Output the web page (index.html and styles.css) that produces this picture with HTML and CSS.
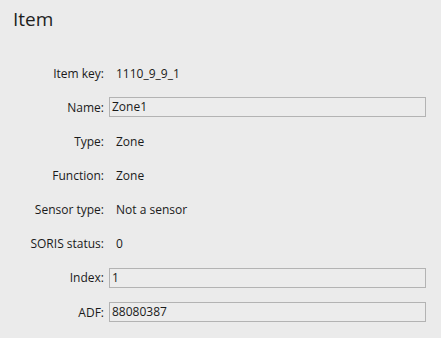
FILE: index.html
```html
<!DOCTYPE html>
<html>
<head>
<meta charset="utf-8">
<link rel="stylesheet" href="styles.css">
</head>
<body>
<div class="panel">
  <h1 class="title">Item</h1>
  <div class="form">
    <div class="label">Item key:</div><div class="value">1110_9_9_1</div>
    <div class="label">Name:</div><div class="field">Zone1</div>
    <div class="label">Type:</div><div class="value">Zone</div>
    <div class="label">Function:</div><div class="value">Zone</div>
    <div class="label">Sensor type:</div><div class="value">Not a sensor</div>
    <div class="label">SORIS status:</div><div class="value">0</div>
    <div class="label">Index:</div><div class="field">1</div>
    <div class="label">ADF:</div><div class="field">88080387</div>
  </div>
</div>
</body>
</html>
```
FILE: styles.css
```css
html, body {
  margin: 0;
  padding: 0;
  background: #ebebeb;
}
.panel {
  width: 441px;
  height: 338px;
  font-family: "Open Sans", "Noto Sans", sans-serif;
  color: #1a1a1a;
  box-sizing: border-box;
  padding: 6px 15px 0 13px;
}
.title {
  margin: 0;
  font-weight: 400;
  font-size: 19px;
  line-height: 26px;
  color: #1e1e1e;
}
.form {
  margin-top: 24px;
  display: grid;
  grid-template-columns: 91px 1fr;
  grid-auto-rows: 34.15px;
  column-gap: 5px;
  align-items: center;
  font-size: 12px;
}
.label {
  text-align: right;
}
.value {
  padding-left: 7px;
}
.field {
  height: 20px;
  line-height: 18px;
  border: 1px solid #b3b3b3;
  box-sizing: border-box;
  padding-left: 2px;
  background: #ececec;
}
```
